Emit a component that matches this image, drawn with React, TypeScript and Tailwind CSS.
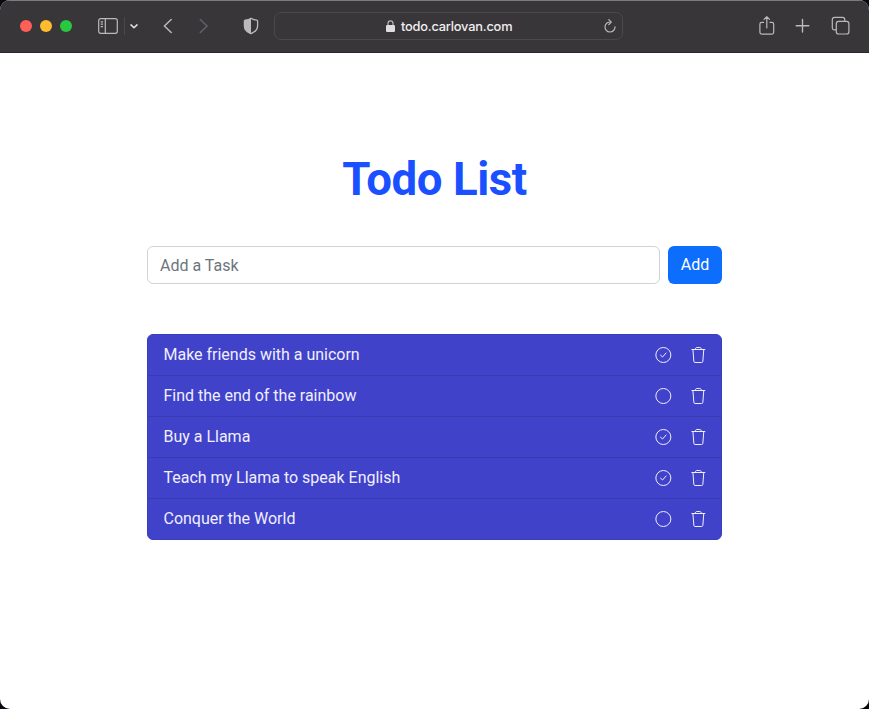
import React from "react";

type Task = { title: string; done: boolean };

const tasks: Task[] = [
  { title: "Make friends with a unicorn", done: true },
  { title: "Find the end of the rainbow", done: false },
  { title: "Buy a Llama", done: true },
  { title: "Teach my Llama to speak English", done: true },
  { title: "Conquer the World", done: false },
];

function StatusIcon({ done }: { done: boolean }) {
  return (
    <svg className="overflow-visible" width="16" height="16" viewBox="-0.35 0 16 16" fill="none" stroke="currentColor">
      <circle cx="8" cy="8" r="7.5" />
      {done && <path d="M5.2 8.2 7.2 10 10.7 6" strokeLinecap="round" strokeLinejoin="round" />}
    </svg>
  );
}

function TrashIcon() {
  return (
    <svg className="overflow-visible" width="16" height="16" viewBox="-0.35 0 16 16" fill="none" stroke="currentColor" strokeLinecap="round" strokeLinejoin="round">
      <path d="M1.5 2.5H14.5M5 2.3C5 1 5.6.5 6.6.5H9.4C10.4.5 11 1 11 2.3" />
      <path d="M2.6 2.8 3.5 14.3Q3.6 15.5 4.7 15.5H11.3Q12.4 15.5 12.5 14.3L13.4 2.8" />
    </svg>
  );
}

function Toolbar() {
  return (
    <header className="flex h-[53px] shrink-0 items-center border-t border-b border-t-[#7c7b7d] border-b-[#29272a] bg-[#39363a] pb-px pl-5 pr-[19px] text-[#bbb9bb]">
      <div className="flex gap-2">
        <span className="size-3 rounded-full bg-[#ff5f57]" />
        <span className="size-3 rounded-full bg-[#febc2e]" />
        <span className="size-3 rounded-full bg-[#28c840]" />
      </div>
      <svg className="ml-[26px]" width="20" height="16" viewBox="0 0 20 16" fill="none" stroke="currentColor" strokeWidth="1.2">
        <rect x=".7" y=".7" width="18.6" height="14.6" rx="2" />
        <path d="M7.3 1V15M2.7 3.8H5M2.7 6.2H5M2.7 8.6H5" />
      </svg>
      <span className="ml-[6px] h-[18px] w-px bg-[#4b484c]" />
      <svg className="ml-[5px]" width="8" height="5" viewBox="0 0 8 5" fill="none" stroke="#e2e1e2" strokeWidth="1.5" strokeLinecap="round" strokeLinejoin="round">
        <path d="M1 .9 4 3.8 7 .9" />
      </svg>
      <svg className="ml-[25px]" width="9" height="16" viewBox="0 0 9 16" fill="none" stroke="currentColor" strokeWidth="1.5" strokeLinecap="round" strokeLinejoin="round">
        <path d="M8.2 1.5 1.4 8 8.2 14.5" />
      </svg>
      <svg className="ml-[27px]" width="9" height="16" viewBox="0 0 9 16" fill="none" stroke="#656267" strokeWidth="1.4" strokeLinecap="round" strokeLinejoin="round">
        <path d="M1.3 1.5 8.1 8 1.3 14.5" />
      </svg>
      <svg className="ml-[35px]" width="16" height="18" viewBox="0 0 16 18">
        <path d="M8 1.3C6.4 2.5 4.5 3 2.2 3.1Q1.4 3.2 1.4 4V9C1.4 12.8 4.2 15.1 8 16.7C11.8 15.1 14.6 12.8 14.6 9V4Q14.6 3.2 13.8 3.1C11.5 3 9.6 2.5 8 1.3Z" fill="none" stroke="currentColor" strokeWidth="1.3" strokeLinejoin="round" />
        <path d="M8 1.3C6.4 2.5 4.5 3 2.2 3.1Q1.4 3.2 1.4 4V9C1.4 12.8 4.2 15.1 8 16.7Z" fill="currentColor" />
      </svg>
      <div className="ml-[15px] flex h-7 w-[349px] items-center rounded-[7px] border border-[#4c494d] pl-[111px] pr-[6px]">
        <svg width="9" height="12" viewBox="0 0 9 12">
          <path d="M2 6V3.4C2 1.7 3 .8 4.5.8S7 1.7 7 3.4V6" fill="none" stroke="#b7b5b8" strokeWidth="1.2" />
          <rect y="5" width="9" height="7" rx="1.2" fill="#dedddf" />
        </svg>
        <span className="ml-1.5 whitespace-nowrap pt-px font-[Inter,sans-serif] text-[12.8px] font-medium leading-5 tracking-[-0.2px] text-[#f0eff0]">todo.carlovan.com</span>
        <svg className="ml-auto" width="12" height="14" viewBox="0 0 12 14" fill="none" stroke="currentColor" strokeWidth="1.2" strokeLinecap="round" strokeLinejoin="round">
          <path d="M6.9 3.1A5 5 0 1 0 11 7.8M4.8.7 7.3 3.2 4.8 5.7" />
        </svg>
      </div>
      <svg className="ml-auto" width="16" height="20" viewBox="0.7 0.3 16 20" fill="none" stroke="currentColor" strokeWidth="1.2" strokeLinecap="round" strokeLinejoin="round" overflow="visible">
        <path d="M5.3 6.7H3.4Q1.6 6.7 1.6 8.5V16.6Q1.6 18.4 3.4 18.4H13.6Q15.4 18.4 15.4 16.6V8.5Q15.4 6.7 13.6 6.7H11.7M8.5 12.3V1M5.8 3.6 8.5 .9 11.2 3.6" />
      </svg>
      <svg className="ml-[21px]" width="14" height="14" viewBox="0.5 0.3 14 14" fill="none" stroke="currentColor" strokeWidth="1.4" strokeLinecap="round" overflow="visible">
        <path d="M7 .7V13.3M.7 7H13.3" />
      </svg>
      <svg className="ml-[22px]" width="18" height="18" viewBox="0.4 0.3 18 18" fill="none" stroke="currentColor" strokeWidth="1.2" overflow="visible">
        <rect x="4.7" y="4.7" width="12.6" height="12.6" rx="2.3" />
        <path d="M4.5 13.2H3Q.7 13.2.7 10.9V3Q.7.7 3 .7H10.9Q13.2.7 13.2 3V4.5" />
      </svg>
    </header>
  );
}

export default function App() {
  return (
    <div className="h-[709px] w-[869px] bg-[#080a12] font-[Roboto,sans-serif]">
      <div className="flex h-full flex-col overflow-hidden rounded-[10px] bg-white">
        <Toolbar />
        <main className="mx-auto w-[575px] pt-[99px]">
          <h1 className="text-center text-[45.6px] font-bold leading-[56px] tracking-[-0.45px] text-[#1a50ff]">Todo List</h1>
          <form className="mt-[38px] flex gap-2" onSubmit={(e) => e.preventDefault()}>
            <input
              type="text"
              placeholder="Add a Task"
              className="h-[38px] min-w-0 flex-1 rounded-md border border-[#ced4da] bg-white px-3 text-base leading-6 text-[#212529] outline-none placeholder:text-[#6c757d]"
            />
            <button className="h-[38px] w-[54px] rounded-md bg-[#0d6efd] text-base leading-6 text-white">Add</button>
          </form>
          <ul className="mt-[50px] overflow-hidden rounded-md border border-[#3c3dbb] bg-[#4042c9]">
            {tasks.map((task) => (
              <li key={task.title} className="flex h-[41px] items-center border-b border-[#393ab0] pl-[15.5px] pr-4 text-[#f0efff] last:h-10 last:border-b-0">
                <span className="flex-1 text-base leading-6 tracking-[-0.01px]">{task.title}</span>
                <button className="mr-[19px]" aria-label="Toggle task">
                  <StatusIcon done={task.done} />
                </button>
                <button className="-mr-px" aria-label="Delete task">
                  <TrashIcon />
                </button>
              </li>
            ))}
          </ul>
        </main>
      </div>
    </div>
  );
}
